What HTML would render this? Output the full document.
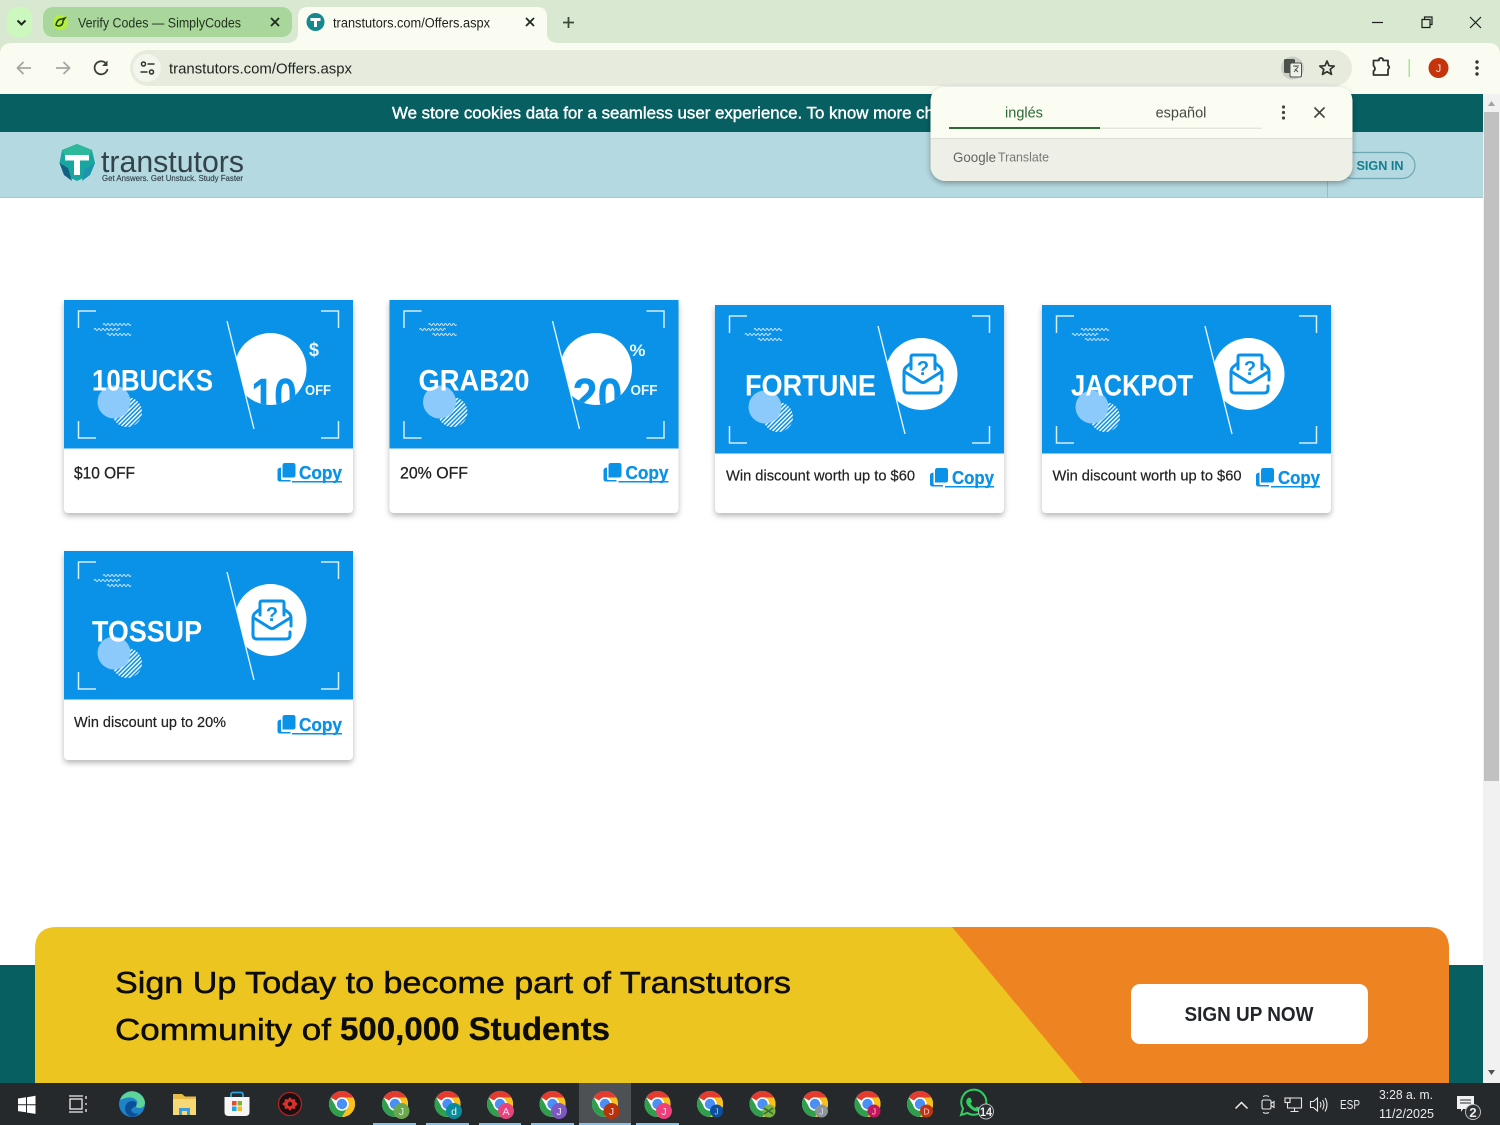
<!DOCTYPE html>
<html lang="es">
<head>
<meta charset="utf-8">
<title>transtutors.com/Offers.aspx</title>
<style>
html,body{margin:0;padding:0;width:1500px;height:1125px;overflow:hidden;background:#fff}
svg{display:block;font-family:"Liberation Sans",sans-serif}
</style>
</head>
<body>
<svg xmlns="http://www.w3.org/2000/svg" width="1500" height="1125" viewBox="0 0 1500 1125">
<defs>
  <pattern id="hatch" width="3" height="3" patternUnits="userSpaceOnUse" patternTransform="rotate(-45)">
    <rect width="3" height="3" fill="#0a91e8"/><rect width="3" height="1.400" fill="#fff"/>
  </pattern>
  <clipPath id="cutline"><polygon points="163,21 190,129 289,129 289,21"/></clipPath>
  <clipPath id="disc"><circle cx="206.500" cy="69" r="36"/></clipPath>
  <filter id="sh" x="-10%" y="-10%" width="120%" height="125%"><feDropShadow dx="0" dy="3" stdDeviation="3" flood-color="#000" flood-opacity=".28"/></filter>
  <filter id="sh2" x="-10%" y="-20%" width="120%" height="140%"><feDropShadow dx="0" dy="2" stdDeviation="3" flood-color="#000" flood-opacity=".35"/></filter>

  <g id="deco">
    <rect width="289" height="148.500" fill="#0a91e8"/>
    <g fill="none" stroke="#d5eefc" stroke-width="1.500">
      <path d="M14.500,28V11H32M257,11H274.500V28M14.500,121V138H32M257,138H274.500V121"/>
    </g>
    <g fill="none" stroke="#cfe9fb" stroke-width=".9">
      <path d="M39,24.500q1,-2 2,0t2,0t2,0t2,0t2,0t2,0t2,0t2,0t2,0t2,0t2,0t2,0t2,0t2,0"/>
      <path d="M30,29.500q1,-2 2,0t2,0t2,0t2,0t2,0t2,0t2,0t2,0t2,0t2,0t2,0t2,0t2,0"/>
      <path d="M43,34.500q1,-2 2,0t2,0t2,0t2,0t2,0t2,0t2,0t2,0t2,0t2,0t2,0t2,0"/>
    </g>
    <circle cx="63" cy="112" r="15" fill="url(#hatch)"/>
    <circle cx="50" cy="102" r="16.500" fill="#8ccafc"/>
    <path d="M163,21L190,129" stroke="#e3f3fd" stroke-width="1.400"/>
    <g clip-path="url(#cutline)"><circle cx="206.500" cy="69" r="36" fill="#fff"/></g>
  </g>

  <g id="env" fill="none" stroke="#0a91e8" stroke-width="3" stroke-linecap="round" stroke-linejoin="round">
    <path d="M196,64V52q0,-2 2,-2H218q2,0 2,2V64"/>
    <path d="M196,58L191,62Q189,64 189,67V84Q189,88 193,88H222Q226,88 226,84V81"/>
    <path d="M220,58L225,62Q227,64 227,67V75"/>
    <path d="M190,67L206,77Q208,78 210,77L226,67"/>
  </g>

  <g id="copy" fill="#0a91e8">
    <path d="M5,2.500q0,-2.500 2.500,-2.500H15.500q2.500,0 2.500,2.500V12q0,2.500 -2.500,2.500H5z"/>
    <path d="M3.500,4.500V15.500q0,1.500 1.500,1.500H13v1.500H2.500Q0,18.500 0,16V7q0,-2 3.500,-2.500z"/>
  </g>

  <g id="chr">
    <circle r="13" fill="#fff"/>
    <path d="M-11.300,-6.500A13,13 0 0 1 11.300,-6.500L0,-6.500Q-4,-6.500 -5.600,-3.200z" fill="#e33b2e"/>
    <path d="M11.300,-6.500A13,13 0 0 1 0,13L5.600,3.200Q7,0 5.600,-3.200L0,-6.500z" fill="#f9c01e"/>
    <path d="M-11.300,-6.500A13,13 0 0 0 0,13L5.600,3.200Q3,6.500 0,6.500Q-4,6.500 -5.600,3.200z" fill="#2f9e4d"/>
    <circle r="6.800" fill="#fff"/><circle r="5.200" fill="#4a8ff5"/>
  </g>
</defs>

<!-- title bar -->
<rect width="1500" height="94" fill="#d8e8d1"/>
<rect x="7" y="7" width="25" height="30" rx="9" fill="#ccf7bf"/>
<path d="M17.500,20.500l4,4l4,-4" fill="none" stroke="#1c2b1c" stroke-width="2"/>
<rect x="43" y="7" width="249" height="30" rx="10" fill="#a8d69b"/>
<circle cx="60.500" cy="22.500" r="7.500" fill="#b4ef3b"/>
<path d="M56,25q1,-6 6,-6l3,-1l-2,3q0,5 -5,5z" fill="none" stroke="#23401c" stroke-width="1.500"/>
<text x="78" y="27.500" font-size="13.500" fill="#24331f" textLength="163" lengthAdjust="spacingAndGlyphs">Verify Codes — SimplyCodes</text>
<path d="M271,18l8,8m0,-8l-8,8" stroke="#1e2b1c" stroke-width="1.800"/>
<path d="M286,43Q298,43 298,33V17Q298,7 308,7H537Q547,7 547,17V33Q547,43 559,43z" fill="#fafcf2"/>
<circle cx="315.500" cy="22" r="9" fill="#14898f"/>
<path d="M310.500,18h10v3h-3.500v6h-3v-6h-3.500z" fill="#fff"/>
<text x="333" y="27.500" font-size="13.500" fill="#1c2219" textLength="157" lengthAdjust="spacingAndGlyphs">transtutors.com/Offers.aspx</text>
<path d="M526,18l8,8m0,-8l-8,8" stroke="#1e2b1c" stroke-width="1.800"/>
<path d="M568.500,17v11M563,22.500h11" stroke="#3a4a38" stroke-width="1.800"/>
<path d="M1372,22.500h11" stroke="#1c1c1c" stroke-width="1.200"/>
<path d="M1422,19.500h8v8h-8zM1424.500,19.500v-2.500h7.500v7.500h-2" fill="none" stroke="#1c1c1c" stroke-width="1.200"/>
<path d="M1470,17l11,11m0,-11l-11,11" stroke="#1c1c1c" stroke-width="1.200"/>

<!-- toolbar -->
<path d="M0,94V55Q0,43 12,43H1488Q1500,43 1500,55V94z" fill="#fafcf2"/>
<path d="M31,68H18m5.500,-6l-6,6l6,6" fill="none" stroke="#a3a8a0" stroke-width="1.800"/>
<path d="M56,68H69m-5.500,-6l6,6l-6,6" fill="none" stroke="#a3a8a0" stroke-width="1.800"/>
<path d="M106,63.500A6.500,6.500 0 1 0 107.500,69" fill="none" stroke="#3b433a" stroke-width="1.800"/>
<path d="M107.500,60.500v5.500h-5.500z" fill="#3b433a"/>
<rect x="130" y="50" width="1222" height="36" rx="18" fill="#e6ebde"/>
<circle cx="147" cy="68" r="14" fill="#f3f6ec"/>
<g fill="none" stroke="#2c332b" stroke-width="1.500">
  <circle cx="143.500" cy="64" r="2"/><path d="M147.500,64h7M140.500,72h7"/><circle cx="151.500" cy="72" r="2"/>
</g>
<text x="169" y="73.500" font-size="15" fill="#20261e" textLength="183" lengthAdjust="spacingAndGlyphs">transtutors.com/Offers.aspx</text>
<circle cx="1292.500" cy="68" r="11.500" fill="#cbd0c6"/>
<rect x="1284" y="59" width="11" height="14" rx="1.500" fill="#4c524b"/>
<rect x="1290" y="63" width="11.500" height="14" rx="1.500" fill="#eef1e8" stroke="#4c524b"/>
<path d="M1293,66h6m-3,0v1m-2,5l4,-5m-3,2l3,3" stroke="#4c524b" fill="none"/>
<path d="M1327,61l2,4.700l5.200,.4l-4,3.300l1.300,5l-4.500,-2.700l-4.500,2.700l1.300,-5l-4,-3.300l5.200,-.4z" fill="none" stroke="#30362f" stroke-width="1.700" stroke-linejoin="round"/>
<path d="M1374,61h5.500v-1.500q2,-2 4,0V61h5v5q2.500,1.500 0,4v5.500h-14.500V71.500q3,-1.500 0,-5.500z" transform="translate(-.5 -.5)" fill="none" stroke="#30362f" stroke-width="1.800" stroke-linejoin="round"/>
<rect x="1408.500" y="59" width="1.500" height="18" fill="#a9e39a"/>
<circle cx="1438.500" cy="68" r="10" fill="#c5340c"/>
<text x="1438.500" y="72" font-size="11" fill="#f5d9cf" text-anchor="middle">J</text>
<g fill="#30362f"><circle cx="1477" cy="62" r="1.700"/><circle cx="1477" cy="68" r="1.700"/><circle cx="1477" cy="74" r="1.700"/></g>

<!-- page top -->
<rect y="94" width="1500" height="38" fill="#075f61"/>
<text x="392" y="118.500" font-size="16.500" fill="#fff" stroke="#fff" stroke-width=".4" textLength="542" lengthAdjust="spacingAndGlyphs">We store cookies data for a seamless user experience. To know more ch</text>
<rect y="132" width="1483" height="65" fill="#b4d9e0"/>
<rect y="197" width="1483" height="1" fill="#9fcbd3"/>
<rect x="1327" y="181" width="1" height="16" fill="#93bcc4"/>

<!-- logo -->
<path d="M77,144L92,150L95,163L90,175L77,181L64,175L59.500,163L62,150z" fill="#1aa6a0"/>
<path d="M62,150L77,144L92,150L88,158H66z" fill="#2cb89a"/>
<path d="M59.500,163L68,168L72,181L64,175z" fill="#155f80"/>
<path d="M82,181L90,175L95,163L84,170z" fill="#1d93ad"/>
<path d="M65,155h24v5.500h-9v14.500h-6v-14.500h-9z" fill="#fff"/>
<text x="101" y="172" font-size="31" fill="#34434a" textLength="143" lengthAdjust="spacingAndGlyphs">transtutors</text>
<text x="102" y="181" font-size="8.500" fill="#34434a" stroke="#34434a" stroke-width=".15" textLength="141" lengthAdjust="spacingAndGlyphs">Get Answers. Get Unstuck. Study Faster</text>

<rect x="1340" y="152.500" width="75" height="26" rx="13" fill="none" stroke="#6ea9b3" stroke-width="1.200"/>
<text x="1356.500" y="170" font-size="13" font-weight="700" fill="#127f90" textLength="47" lengthAdjust="spacingAndGlyphs">SIGN IN</text>

<!-- scrollbar -->
<rect x="1483" y="94" width="17" height="989" fill="#f1f1f1"/>
<rect x="1484" y="112" width="15" height="669" fill="#c1c1c1"/>
<path d="M1488,106l3.500,-5l3.500,5z" fill="#a3a3a3"/>
<path d="M1488,1070l3.500,5l3.500,-5z" fill="#505050"/>

<!-- card 1 -->
<g transform="translate(64 300)">
  <path d="M0,0H289V208q0,5 -5,5H5q-5,0 -5,-5z" fill="#fff" filter="url(#sh)"/>
  <use href="#deco"/>
  <g clip-path="url(#cutline)"><g clip-path="url(#disc)"><text x="187" y="112" font-size="48" font-weight="700" fill="#0a91e8" textLength="46" lengthAdjust="spacingAndGlyphs">10</text></g></g>
  <text x="245" y="56" font-size="19" font-weight="700" fill="#e9f6fe" textLength="10" lengthAdjust="spacingAndGlyphs">$</text>
  <text x="241" y="95" font-size="15" font-weight="700" fill="#e9f6fe" textLength="26" lengthAdjust="spacingAndGlyphs">OFF</text>
  <text x="28" y="90.500" font-size="30" font-weight="700" fill="#fff" textLength="121" lengthAdjust="spacingAndGlyphs">10BUCKS</text>
  <text x="10" y="178.500" font-size="17" fill="#222" stroke="#222" stroke-width=".3" textLength="61" lengthAdjust="spacingAndGlyphs">$10 OFF</text>
  <use href="#copy" x="213.500" y="163"/>
  <text x="235" y="179" font-size="18" font-weight="700" fill="#0a91e8" stroke="#0a91e8" stroke-width=".3" textLength="43" lengthAdjust="spacingAndGlyphs">Copy</text>
  <rect x="228" y="181" width="50" height="1.500" fill="#0a91e8"/>
</g>
<!-- card 2 -->
<g transform="translate(389.500 300)">
  <path d="M0,0H289V208q0,5 -5,5H5q-5,0 -5,-5z" fill="#fff" filter="url(#sh)"/>
  <use href="#deco"/>
  <g clip-path="url(#cutline)"><g clip-path="url(#disc)"><text x="183" y="112" font-size="48" font-weight="700" fill="#0a91e8" textLength="50" lengthAdjust="spacingAndGlyphs">20</text></g></g>
  <text x="240" y="56" font-size="17" font-weight="700" fill="#e9f6fe" textLength="16" lengthAdjust="spacingAndGlyphs">%</text>
  <text x="241" y="95" font-size="15" font-weight="700" fill="#e9f6fe" textLength="27" lengthAdjust="spacingAndGlyphs">OFF</text>
  <text x="29" y="90.500" font-size="30" font-weight="700" fill="#fff" textLength="111" lengthAdjust="spacingAndGlyphs">GRAB20</text>
  <text x="10.500" y="178.500" font-size="17" fill="#222" stroke="#222" stroke-width=".3" textLength="68" lengthAdjust="spacingAndGlyphs">20% OFF</text>
  <use href="#copy" x="214" y="163"/>
  <text x="236" y="179" font-size="18" font-weight="700" fill="#0a91e8" stroke="#0a91e8" stroke-width=".3" textLength="43" lengthAdjust="spacingAndGlyphs">Copy</text>
  <rect x="229" y="181" width="50" height="1.500" fill="#0a91e8"/>
</g>
<!-- card 3 -->
<g transform="translate(715 305)">
  <path d="M0,0H289V203q0,5 -5,5H5q-5,0 -5,-5z" fill="#fff" filter="url(#sh)"/>
  <use href="#deco"/>
  <use href="#env"/>
  <text x="208" y="70" font-size="20" font-weight="700" fill="#0a91e8" text-anchor="middle">?</text>
  <text x="30" y="90.500" font-size="30" font-weight="700" fill="#fff" textLength="131" lengthAdjust="spacingAndGlyphs">FORTUNE</text>
  <text x="11" y="175.500" font-size="14.500" fill="#222" stroke="#222" stroke-width=".2" textLength="189" lengthAdjust="spacingAndGlyphs">Win discount worth up to $60</text>
  <use href="#copy" x="215" y="163"/>
  <text x="237" y="179" font-size="18" font-weight="700" fill="#0a91e8" stroke="#0a91e8" stroke-width=".3" textLength="42" lengthAdjust="spacingAndGlyphs">Copy</text>
  <rect x="230" y="181" width="49" height="1.500" fill="#0a91e8"/>
</g>
<!-- card 4 -->
<g transform="translate(1042 305)">
  <path d="M0,0H289V203q0,5 -5,5H5q-5,0 -5,-5z" fill="#fff" filter="url(#sh)"/>
  <use href="#deco"/>
  <use href="#env"/>
  <text x="208" y="70" font-size="20" font-weight="700" fill="#0a91e8" text-anchor="middle">?</text>
  <text x="29" y="90.500" font-size="30" font-weight="700" fill="#fff" textLength="122" lengthAdjust="spacingAndGlyphs">JACKPOT</text>
  <text x="10.500" y="175.500" font-size="14.500" fill="#222" stroke="#222" stroke-width=".2" textLength="189" lengthAdjust="spacingAndGlyphs">Win discount worth up to $60</text>
  <use href="#copy" x="214" y="163"/>
  <text x="236" y="179" font-size="18" font-weight="700" fill="#0a91e8" stroke="#0a91e8" stroke-width=".3" textLength="42" lengthAdjust="spacingAndGlyphs">Copy</text>
  <rect x="229" y="181" width="49" height="1.500" fill="#0a91e8"/>
</g>
<!-- card 5 -->
<g transform="translate(64 551)">
  <path d="M0,0H289V204q0,5 -5,5H5q-5,0 -5,-5z" fill="#fff" filter="url(#sh)"/>
  <use href="#deco"/>
  <use href="#env"/>
  <text x="208" y="70" font-size="20" font-weight="700" fill="#0a91e8" text-anchor="middle">?</text>
  <text x="28" y="90.500" font-size="30" font-weight="700" fill="#fff" textLength="110" lengthAdjust="spacingAndGlyphs">TOSSUP</text>
  <text x="10" y="176" font-size="14.500" fill="#222" stroke="#222" stroke-width=".2" textLength="152" lengthAdjust="spacingAndGlyphs">Win discount up to 20%</text>
  <use href="#copy" x="213.500" y="164"/>
  <text x="235" y="180" font-size="18" font-weight="700" fill="#0a91e8" stroke="#0a91e8" stroke-width=".3" textLength="43" lengthAdjust="spacingAndGlyphs">Copy</text>
  <rect x="228" y="182" width="50" height="1.500" fill="#0a91e8"/>
</g>

<!-- sign up band -->
<rect y="965" width="1483" height="118" fill="#075f61"/>
<path d="M35,1083V949Q35,927 57,927H1427Q1449,927 1449,949V1083z" fill="#edc520"/>
<path d="M952,927H1427Q1449,927 1449,949V1083H1082z" fill="#ee8322"/>
<text x="115" y="993" font-size="31" fill="#0c0c08" stroke="#0c0c08" stroke-width=".5" textLength="676" lengthAdjust="spacingAndGlyphs">Sign Up Today to become part of Transtutors</text>
<text x="115" y="1040" font-size="31" fill="#0c0c08" stroke="#0c0c08" stroke-width=".5" textLength="216" lengthAdjust="spacingAndGlyphs">Community of</text>
<text x="340" y="1040" font-size="32" font-weight="700" fill="#0c0c08" stroke="#0c0c08" stroke-width=".3" textLength="270" lengthAdjust="spacingAndGlyphs">500,000 Students</text>
<rect x="1131" y="984" width="237" height="60" rx="9" fill="#fff"/>
<text x="1184.500" y="1021" font-size="20" font-weight="700" fill="#22262a" textLength="129" lengthAdjust="spacingAndGlyphs">SIGN UP NOW</text>

<!-- translate popup -->
<g filter="url(#sh2)">
  <rect x="930.500" y="87" width="422" height="94" rx="15" fill="#eef0e8"/>
</g>
<path d="M930.500,138V102Q930.500,87 945.500,87H1337.500Q1352.500,87 1352.500,102V138z" fill="#fbfdf3"/>
<rect x="930.500" y="138" width="422" height="1" fill="#dcdfd6"/>
<text x="1024" y="117.500" font-size="14.500" fill="#2f6a35" text-anchor="middle">inglés</text>
<text x="1181" y="117.500" font-size="14.500" fill="#444a42" text-anchor="middle">español</text>
<rect x="949" y="127" width="151" height="2" fill="#2f6a35"/>
<rect x="1100" y="127.700" width="162" height="1" fill="#dadcd4"/>
<g fill="#41473f"><circle cx="1283.500" cy="107" r="1.600"/><circle cx="1283.500" cy="112.500" r="1.600"/><circle cx="1283.500" cy="118" r="1.600"/></g>
<path d="M1314.500,107.500l10,10m0,-10l-10,10" stroke="#41473f" stroke-width="1.600"/>
<text x="953" y="162" font-size="14" fill="#62665f" textLength="43" lengthAdjust="spacingAndGlyphs">Google</text>
<text x="998" y="161.500" font-size="13" fill="#767a73" textLength="51" lengthAdjust="spacingAndGlyphs">Translate</text>

<!-- taskbar -->
<rect y="1083" width="1500" height="42" fill="#26292c"/>
<rect x="579" y="1083" width="52" height="42" fill="#4d5155"/>
<g fill="#fff"><path d="M18,1098.500l8,-1.200v7h-8zM27,1097.200l8.500,-1.500v8.600h-8.500zM18,1105.300h8v7l-8,-1.200zM27,1105.300h8.500v8.600l-8.500,-1.300z"/></g>
<g fill="none" stroke="#eee" stroke-width="1.300"><rect x="70" y="1099" width="12" height="10"/><path d="M69,1096h14M69,1112h14M86,1096v3M86,1103v2M86,1109v3"/></g>

<!-- edge -->
<circle cx="132" cy="1104" r="13" fill="#1f83c9"/>
<path d="M120,1100a13,13 0 0 1 25,2q0,6 -6,6q-3,0 -3,-2q2,-2 1,-5q-4,-5 -11,-3q-4,1 -6,2z" fill="#5ed39a"/>
<path d="M125,1108q1,-7 8,-7q4,0 3,5q-3,1 -5,4q2,5 8,3a13,13 0 0 1 -7,4q-7,-2 -7,-9z" fill="#0d4f96"/>
<!-- folder -->
<path d="M173,1094h9l3,2.500h11v18.500h-23z" fill="#e8bb47"/>
<rect x="173" y="1099" width="23" height="16" fill="#f6d875"/>
<rect x="179" y="1108" width="11" height="7" fill="#3f9bdc"/>
<rect x="182" y="1111" width="5" height="4" fill="#f6d875"/>
<!-- store -->
<path d="M224.500,1097h25v15q0,4 -4,4h-17q-4,0 -4,-4z" fill="#f5f5f5"/>
<path d="M231,1097v-2q0,-2.500 2,-2.500h8q2,0 2,2.500v2" fill="none" stroke="#2ba3e0" stroke-width="1.800"/>
<rect x="232" y="1101" width="4.500" height="4.500" fill="#e8492f"/><rect x="237.500" y="1101" width="4.500" height="4.500" fill="#7db928"/>
<rect x="232" y="1106.500" width="4.500" height="4.500" fill="#1fa4e8"/><rect x="237.500" y="1106.500" width="4.500" height="4.500" fill="#f7b91e"/>
<!-- red app -->
<circle cx="290" cy="1104" r="11.500" fill="#170f10" stroke="#b3211f" stroke-width="1.300"/>
<path d="M290,1097l2,2.500l3,-.5l.5,3l2.500,2l-2.500,2l-.5,3l-3,-.5l-2,2.500l-2,-2.500l-3,.5l-.5,-3l-2.500,-2l2.500,-2l.5,-3l3,.5z" fill="#d9302c"/>
<circle cx="290" cy="1104" r="2.200" fill="#170f10"/>

<use href="#chr" x="342" y="1104"/>
<use href="#chr" x="395" y="1104"/><circle cx="401.500" cy="1111" r="8" fill="#6aa84f"/><text x="401.500" y="1115" font-size="10.500" fill="#e6f2dd" text-anchor="middle">J</text>
<use href="#chr" x="447.500" y="1104"/><circle cx="454" cy="1111" r="8" fill="#0a8a9a"/><text x="454" y="1115" font-size="10.500" fill="#dff" text-anchor="middle">d</text>
<use href="#chr" x="500" y="1104"/><circle cx="506" cy="1111" r="8" fill="#e8437e"/><text x="506" y="1115" font-size="10.500" fill="#fde" text-anchor="middle">A</text>
<use href="#chr" x="552.500" y="1104"/><circle cx="559" cy="1111" r="8" fill="#7e57c2"/><text x="559" y="1115" font-size="10.500" fill="#eee" text-anchor="middle">J</text>
<use href="#chr" x="605" y="1104"/><circle cx="611.500" cy="1111" r="8" fill="#b93208"/><text x="611.500" y="1115" font-size="10.500" fill="#fde" text-anchor="middle">J</text>
<use href="#chr" x="657.500" y="1104"/><circle cx="664" cy="1111" r="8" fill="#ec407a"/><text x="664" y="1115" font-size="10.500" fill="#fde" text-anchor="middle">J</text>
<use href="#chr" x="710" y="1104"/><circle cx="716.500" cy="1111" r="6.500" fill="#0b4f9e"/><text x="716.500" y="1114.500" font-size="8.500" fill="#bcd" text-anchor="middle">J</text>
<use href="#chr" x="762.500" y="1104"/><circle cx="769" cy="1111" r="6.500" fill="#7cb342"/><path d="M764,1108l9,6m0,-6l-9,6" stroke="#2f6d2a" stroke-width="1.500"/>
<use href="#chr" x="815" y="1104"/><circle cx="821.500" cy="1111" r="6.500" fill="#8a9499"/><text x="821.500" y="1114.500" font-size="8.500" fill="#dde" text-anchor="middle">J</text>
<use href="#chr" x="867.500" y="1104"/><circle cx="874" cy="1111" r="6.500" fill="#c2185b"/><text x="874" y="1114.500" font-size="8.500" fill="#fcd" text-anchor="middle">J</text>
<use href="#chr" x="920" y="1104"/><circle cx="926.500" cy="1111" r="6.500" fill="#bf360c"/><text x="926.500" y="1114.500" font-size="8.500" fill="#fcd" text-anchor="middle">D</text>

<!-- whatsapp -->
<path d="M961,1115l2,-6.500a12.500,12.500 0 1 1 4.500,4.500z" fill="#26292c" stroke="#2fd05f" stroke-width="2"/>
<path d="M968,1098q2,-1 3,1l1,2.500l-1.500,2q1.500,3 4.500,4.500l2,-1.500l2.500,1q2,1 1,3q-3,2 -7,0q-5,-3 -7,-7q-1,-3 1.500,-5.500z" fill="#2fd05f"/>
<circle cx="986" cy="1111.500" r="7.500" fill="#2d3033" stroke="#b9bcbe" stroke-width="1"/>
<text x="986" y="1116" font-size="12" font-weight="700" fill="#eee" text-anchor="middle" textLength="12" lengthAdjust="spacingAndGlyphs">14</text>

<!-- task underlines -->
<g fill="#7fc4f0">
  <rect x="373" y="1123" width="43" height="2"/><rect x="426" y="1123" width="43" height="2"/><rect x="479" y="1123" width="42" height="2"/>
  <rect x="531" y="1123" width="43" height="2"/><rect x="579" y="1123" width="52" height="2"/><rect x="636" y="1123" width="43" height="2"/>
</g>

<!-- tray -->
<path d="M1235.500,1108.500l6,-6l6,6" fill="none" stroke="#eee" stroke-width="1.500"/>
<g fill="none" stroke="#e8e8e8" stroke-width="1.100">
  <rect x="1262" y="1100" width="9" height="9" rx="1.500"/><path d="M1271,1103.500l3,-2v6l-3,-2M1263,1096.500q3,-1.500 6,0M1263,1112.500q3,1.500 6,0"/>
  <path d="M1289,1098h12.500v10h-14v-6M1294.500,1108v3M1290.500,1111.500h8"/><rect x="1285" y="1098" width="5" height="4.500"/>
  <path d="M1310.500,1101.500h3l4,-3.500v13l-4,-3.500h-3zM1320,1102q2,2.500 0,5.500M1322.500,1100q3,4.500 0,9.500M1325,1098q4,6.500 0,13.500"/>
</g>
<text x="1340" y="1109" font-size="13" fill="#eaeaea" textLength="20" lengthAdjust="spacingAndGlyphs">ESP</text>
<text x="1379" y="1099" font-size="13" fill="#eaeaea" textLength="54" lengthAdjust="spacingAndGlyphs">3:28 a. m.</text>
<text x="1379" y="1118" font-size="13" fill="#eaeaea" textLength="55" lengthAdjust="spacingAndGlyphs">11/2/2025</text>
<path d="M1457,1096h17v13h-11l-2,3v-3h-4z" fill="#f1f1f1"/>
<path d="M1460,1100h11M1460,1103h11" stroke="#26292c"/>
<circle cx="1473" cy="1112" r="7.500" fill="#2d3033" stroke="#b9bcbe"/>
<text x="1473" y="1117" font-size="13" font-weight="700" fill="#eee" text-anchor="middle">2</text>
</svg>
</body>
</html>
